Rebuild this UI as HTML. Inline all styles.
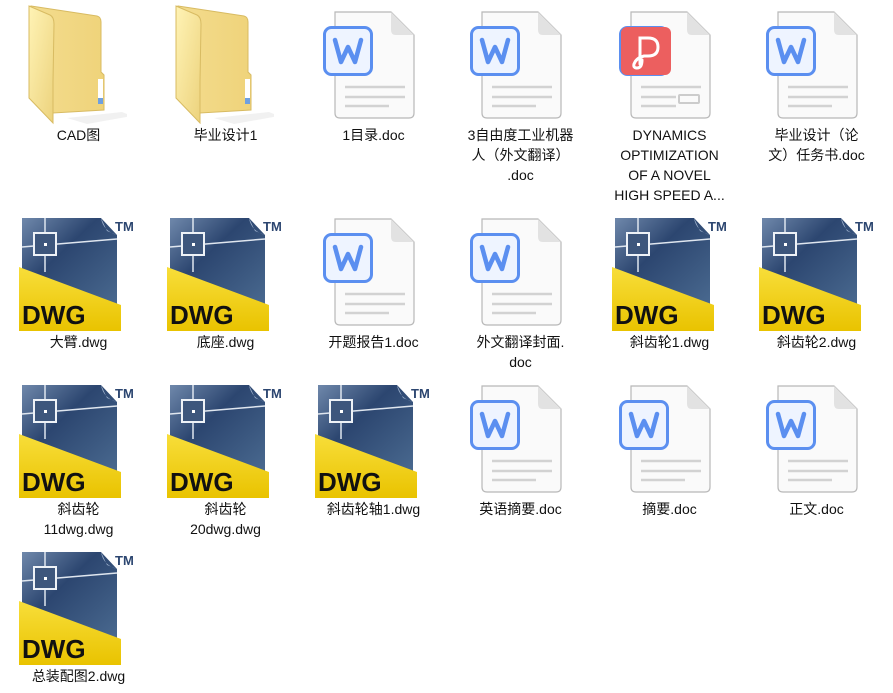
<!DOCTYPE html>
<html><head><meta charset="utf-8">
<style>
body{margin:0;width:893px;height:693px;background:#fff;overflow:hidden;position:relative;font-family:"Liberation Sans","Noto Sans CJK SC",sans-serif;}
.i{position:absolute;}
.l{position:absolute;width:147px;text-align:center;font-size:14px;line-height:20px;color:#111;}
</style></head><body>
<svg width="0" height="0" style="position:absolute">
<defs>
<linearGradient id="fg" x1="0" y1="0" x2="1" y2="0"><stop offset="0" stop-color="#f3dc8e"/><stop offset="1" stop-color="#efd37a"/></linearGradient>
<linearGradient id="ff" x1="0" y1="0" x2="1" y2="1"><stop offset="0" stop-color="#fff3b5"/><stop offset="1" stop-color="#ecd27c"/></linearGradient>
<linearGradient id="db" x1="0" y1="0" x2="1" y2="1"><stop offset="0" stop-color="#6f88ab"/><stop offset="0.4" stop-color="#2c4670"/><stop offset="1" stop-color="#4a6a90"/></linearGradient>
<linearGradient id="yl" x1="0" y1="0" x2="0" y2="1"><stop offset="0" stop-color="#f8de3a"/><stop offset="1" stop-color="#e9c300"/></linearGradient>
<symbol id="folder" viewBox="0 0 100 125">
<path d="M40 118 L95 112 L105 116 L60 124 Z" fill="#e8e8e8" opacity="0.6"/>
<path d="M4 6 L70 16 Q74 17 74 22 L74 72 L77 75 L77 110 L26 113 Z" fill="url(#fg)" stroke="#d8bb62" stroke-width="1"/>
<rect x="71" y="79" width="5" height="25" fill="#fff"/><rect x="71" y="98" width="5" height="6" fill="#6fa0e0"/>
<path d="M2 6 L23 15 Q27 17 27 24 L26 82 L26 123 L2 98 Z" fill="url(#ff)" stroke="#d8bb62" stroke-width="1"/>
</symbol>
<symbol id="doc" viewBox="0 0 92 108">
<path d="M12 1 L68 1 L91 24 L91 102 Q91 107 86 107 L17 107 Q12 107 12 102 Z" fill="#fafafa" stroke="#b8b8b8" stroke-width="1.2"/>
<path d="M68 1 L68 19 Q68 24 73 24 L91 24 Z" fill="#e2e2e2"/>
<line x1="22" y1="76" x2="82" y2="76" stroke="#d2d2d2" stroke-width="2.5"/>
<line x1="22" y1="86" x2="82" y2="86" stroke="#d2d2d2" stroke-width="2.5"/>
<line x1="22" y1="95" x2="66" y2="95" stroke="#d2d2d2" stroke-width="2.5"/>
<rect x="1.5" y="16.5" width="47" height="47" rx="7" fill="#eef4ff" stroke="#5b8ff0" stroke-width="3"/>
<path d="M12 29 L18 51 L25 36 L32 51 L38 29" fill="none" stroke="#5b8ff0" stroke-width="4.5" stroke-linejoin="round" stroke-linecap="round"/>
</symbol>
<symbol id="dwg" viewBox="0 0 120 116">
<path d="M3 1 L82 1 L98 18 L98 90 L3 90 Z" fill="url(#db)"/>
<path d="M82 1 Q84 14 98 18 L88 14 Z" fill="#9db0cc"/>
<line x1="3" y1="30" x2="98" y2="22" stroke="#dfe6ef" stroke-width="1.5"/>
<line x1="26" y1="1" x2="26" y2="55" stroke="#dfe6ef" stroke-width="1.5"/>
<rect x="15" y="16" width="22" height="22" fill="#3d567c" stroke="#eef2f7" stroke-width="2"/>
<rect x="25" y="26" width="3" height="3" fill="#fff"/>
<path d="M0 50 L102 88 L102 114 L0 114 Z" fill="url(#yl)"/>
<text x="3" y="107" font-family="Liberation Sans,sans-serif" font-weight="bold" font-size="26" fill="#111">DWG</text>
<text x="96" y="14" font-family="Liberation Sans,sans-serif" font-weight="bold" font-size="13" fill="#2c4670">TM</text>
</symbol>
</defs></svg>

<!-- Row 1 -->
<svg class="i" style="left:27px;top:0px" width="100" height="125"><use href="#folder"/></svg>
<div class="l" style="left:5px;top:125px">CAD图</div>
<svg class="i" style="left:174px;top:0px" width="100" height="125"><use href="#folder"/></svg>
<div class="l" style="left:152px;top:125px">毕业设计1</div>
<svg class="i" style="left:323px;top:11px" width="92" height="108"><use href="#doc"/></svg>
<div class="l" style="left:300px;top:125px">1目录.doc</div>
<svg class="i" style="left:470px;top:11px" width="92" height="108"><use href="#doc"/></svg>
<div class="l" style="left:447px;top:125px">3自由度工业机器<br>人（外文翻译）<br>.doc</div>
<svg class="i" style="left:619px;top:11px" width="92" height="108"><use href="#doc"/></svg>
<svg class="i" style="left:620px;top:26px" width="52" height="52"><rect x="1" y="1" width="50" height="48" rx="6" fill="#ec5f5f"/><path d="M20 38 L20 12 L28 12 Q38 12 38 21 Q38 30 28 30 L24 30 Q16 32 14 38 Q13 42 17 42 Q22 42 22 34" fill="none" stroke="#fff" stroke-width="3" stroke-linecap="round"/></svg>
<svg class="i" style="left:676px;top:90px" width="30" height="24"><rect x="0" y="0" width="30" height="24" fill="#fafafa"/><rect x="3" y="5" width="20" height="8" rx="1" fill="none" stroke="#ccc" stroke-width="2"/></svg>
<div class="l" style="left:596px;top:125px">DYNAMICS<br>OPTIMIZATION<br>OF A NOVEL<br>HIGH SPEED A...</div>
<svg class="i" style="left:766px;top:11px" width="92" height="108"><use href="#doc"/></svg>
<div class="l" style="left:743px;top:125px">毕业设计（论<br>文）任务书.doc</div>

<!-- Row 2 -->
<svg class="i" style="left:19px;top:217px" width="120" height="116"><use href="#dwg"/></svg>
<div class="l" style="left:5px;top:332px">大臂.dwg</div>
<svg class="i" style="left:167px;top:217px" width="120" height="116"><use href="#dwg"/></svg>
<div class="l" style="left:152px;top:332px">底座.dwg</div>
<svg class="i" style="left:323px;top:218px" width="92" height="108"><use href="#doc"/></svg>
<div class="l" style="left:300px;top:332px">开题报告1.doc</div>
<svg class="i" style="left:470px;top:218px" width="92" height="108"><use href="#doc"/></svg>
<div class="l" style="left:447px;top:332px">外文翻译封面.<br>doc</div>
<svg class="i" style="left:612px;top:217px" width="120" height="116"><use href="#dwg"/></svg>
<div class="l" style="left:596px;top:332px">斜齿轮1.dwg</div>
<svg class="i" style="left:759px;top:217px" width="120" height="116"><use href="#dwg"/></svg>
<div class="l" style="left:743px;top:332px">斜齿轮2.dwg</div>

<!-- Row 3 -->
<svg class="i" style="left:19px;top:384px" width="120" height="116"><use href="#dwg"/></svg>
<div class="l" style="left:5px;top:499px">斜齿轮<br>11dwg.dwg</div>
<svg class="i" style="left:167px;top:384px" width="120" height="116"><use href="#dwg"/></svg>
<div class="l" style="left:152px;top:499px">斜齿轮<br>20dwg.dwg</div>
<svg class="i" style="left:315px;top:384px" width="120" height="116"><use href="#dwg"/></svg>
<div class="l" style="left:300px;top:499px">斜齿轮轴1.dwg</div>
<svg class="i" style="left:470px;top:385px" width="92" height="108"><use href="#doc"/></svg>
<div class="l" style="left:447px;top:499px">英语摘要.doc</div>
<svg class="i" style="left:619px;top:385px" width="92" height="108"><use href="#doc"/></svg>
<div class="l" style="left:596px;top:499px">摘要.doc</div>
<svg class="i" style="left:766px;top:385px" width="92" height="108"><use href="#doc"/></svg>
<div class="l" style="left:743px;top:499px">正文.doc</div>

<!-- Row 4 -->
<svg class="i" style="left:19px;top:551px" width="120" height="116"><use href="#dwg"/></svg>
<div class="l" style="left:5px;top:666px">总装配图2.dwg</div>
</body></html>
